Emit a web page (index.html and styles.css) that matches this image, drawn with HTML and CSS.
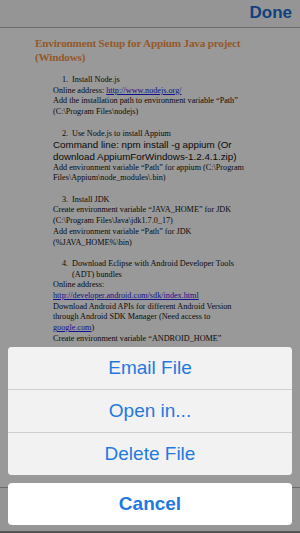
FILE: index.html
```html
<!DOCTYPE html>
<html lang="en">
<head>
    <meta charset="UTF-8">
    <meta name="viewport" content="width=device-width, initial-scale=1.0">
    <title>Appium Setup</title>
    <link rel="stylesheet" href="styles.css">
</head>
<body>
    <div class="screen">
        <div class="navbar">
            <button class="nav-btn">Done</button>
        </div>

        <div class="doc">
            <h2 class="doc-title">Environment Setup for Appium Java project<br>(Windows)</h2>

            <div class="step">
                <p class="step-head"><span class="num">1.</span>Install Node.js</p>
                <p>Online address: <a href="#">http://www.nodejs.org/</a><br>
                Add the installation path to environment variable “Path”<br>
                (C:\Program Files\nodejs)</p>
            </div>

            <div class="step">
                <p class="step-head"><span class="num">2.</span>Use Node.js to install Appium</p>
                <p class="cmd">Command line: npm install -g appium (Or<br>download AppiumForWindows-1.2.4.1.zip)</p>
                <p>Add environment variable “Path” for appium (C:\Program<br>
                Files\Appium\node_modules\.bin)</p>
            </div>

            <div class="step">
                <p class="step-head"><span class="num">3.</span>Install JDK</p>
                <p>Create environment variable “JAVA_HOME” for JDK<br>
                (C:\Program Files\Java\jdk1.7.0_17)<br>
                Add environment variable “Path” for JDK<br>
                (%JAVA_HOME%\bin)</p>
            </div>

            <div class="step">
                <p class="step-head"><span class="num">4.</span>Download Eclipse with Android Developer Tools<br>(ADT) bundles</p>
                <p>Online address:<br>
                <a href="#">http://developer.android.com/sdk/index.html</a><br>
                Download Android APIs for different Android Version<br>
                through Android SDK Manager (Need access to<br>
                <a href="#">google.com</a>)<br>
                Create environment variable “ANDROID_HOME”</p>
            </div>
        </div>

        <div class="toolbar"></div>

        <div class="dim"></div>

        <div class="sheet">
            <div class="sheet-group">
                <button class="sheet-btn">Email File</button>
                <button class="sheet-btn">Open in...</button>
                <button class="sheet-btn">Delete File</button>
            </div>
            <button class="sheet-btn sheet-cancel">Cancel</button>
        </div>
    </div>
</body>
</html>
```

FILE: styles.css
```css
body {
    margin: 0;
    background: #555;
}

.screen {
    position: relative;
    width: 300px;
    height: 531px;
    overflow: hidden;
    background: #fff;
    font-family: "Liberation Sans", Arial, sans-serif;
}

.navbar {
    height: 28px;
    background: #f8f8f8;
    border-bottom: 1px solid #b2b2b2;
    box-sizing: border-box;
    display: flex;
    justify-content: flex-end;
    align-items: center;
    padding-right: 8px;
}

.nav-btn {
    background: none;
    border: none;
    padding: 0;
    font-family: "Liberation Sans", Arial, sans-serif;
    font-size: 17px;
    font-weight: bold;
    color: #1a6fd6;
    margin-top: -2px;
}

.doc {
    padding: 8px 0 0 35px;
    font-family: "Liberation Serif", "Times New Roman", serif;
    font-size: 8.2px;
    line-height: 10.7px;
    color: #111;
    white-space: nowrap;
}

.doc-title {
    margin: 0 0 11px;
    font-size: 11.2px;
    line-height: 14px;
    letter-spacing: -0.2px;
    font-weight: bold;
    color: #f79646;
}

.doc p {
    margin: 0;
    padding-left: 18px;
}

.doc a {
    color: #1a1aee;
}

.step {
    margin-bottom: 10.7px;
}

.doc .step-head {
    padding-left: 37px;
    text-indent: -10px;
}

.num {
    display: inline-block;
    width: 10px;
    text-indent: 0;
}

.doc .cmd {
    font-family: "Liberation Sans", Arial, sans-serif;
    font-size: 9.8px;
    line-height: 11.7px;
}

.toolbar {
    position: absolute;
    left: 0;
    right: 0;
    bottom: 0;
    height: 43px;
    background: #f8f8f8;
    border-top: 1px solid #b2b2b2;
}

.dim {
    position: absolute;
    inset: 0;
    background: rgba(0, 0, 0, 0.4);
}

.sheet {
    position: absolute;
    left: 8px;
    right: 8px;
    bottom: 6px;
    display: flex;
    flex-direction: column;
    gap: 8px;
}

.sheet-group {
    display: flex;
    flex-direction: column;
    gap: 1px;
    background: #cfcfcf;
    border-radius: 4px;
    overflow: hidden;
}

.sheet-btn {
    height: 42px;
    border: none;
    background: #f2f2f2;
    font-family: "Liberation Sans", Arial, sans-serif;
    font-size: 19px;
    color: #1f7ae0;
    padding: 0;
}

.sheet-cancel {
    background: #fff;
    border-radius: 4px;
    font-weight: bold;
}
```
